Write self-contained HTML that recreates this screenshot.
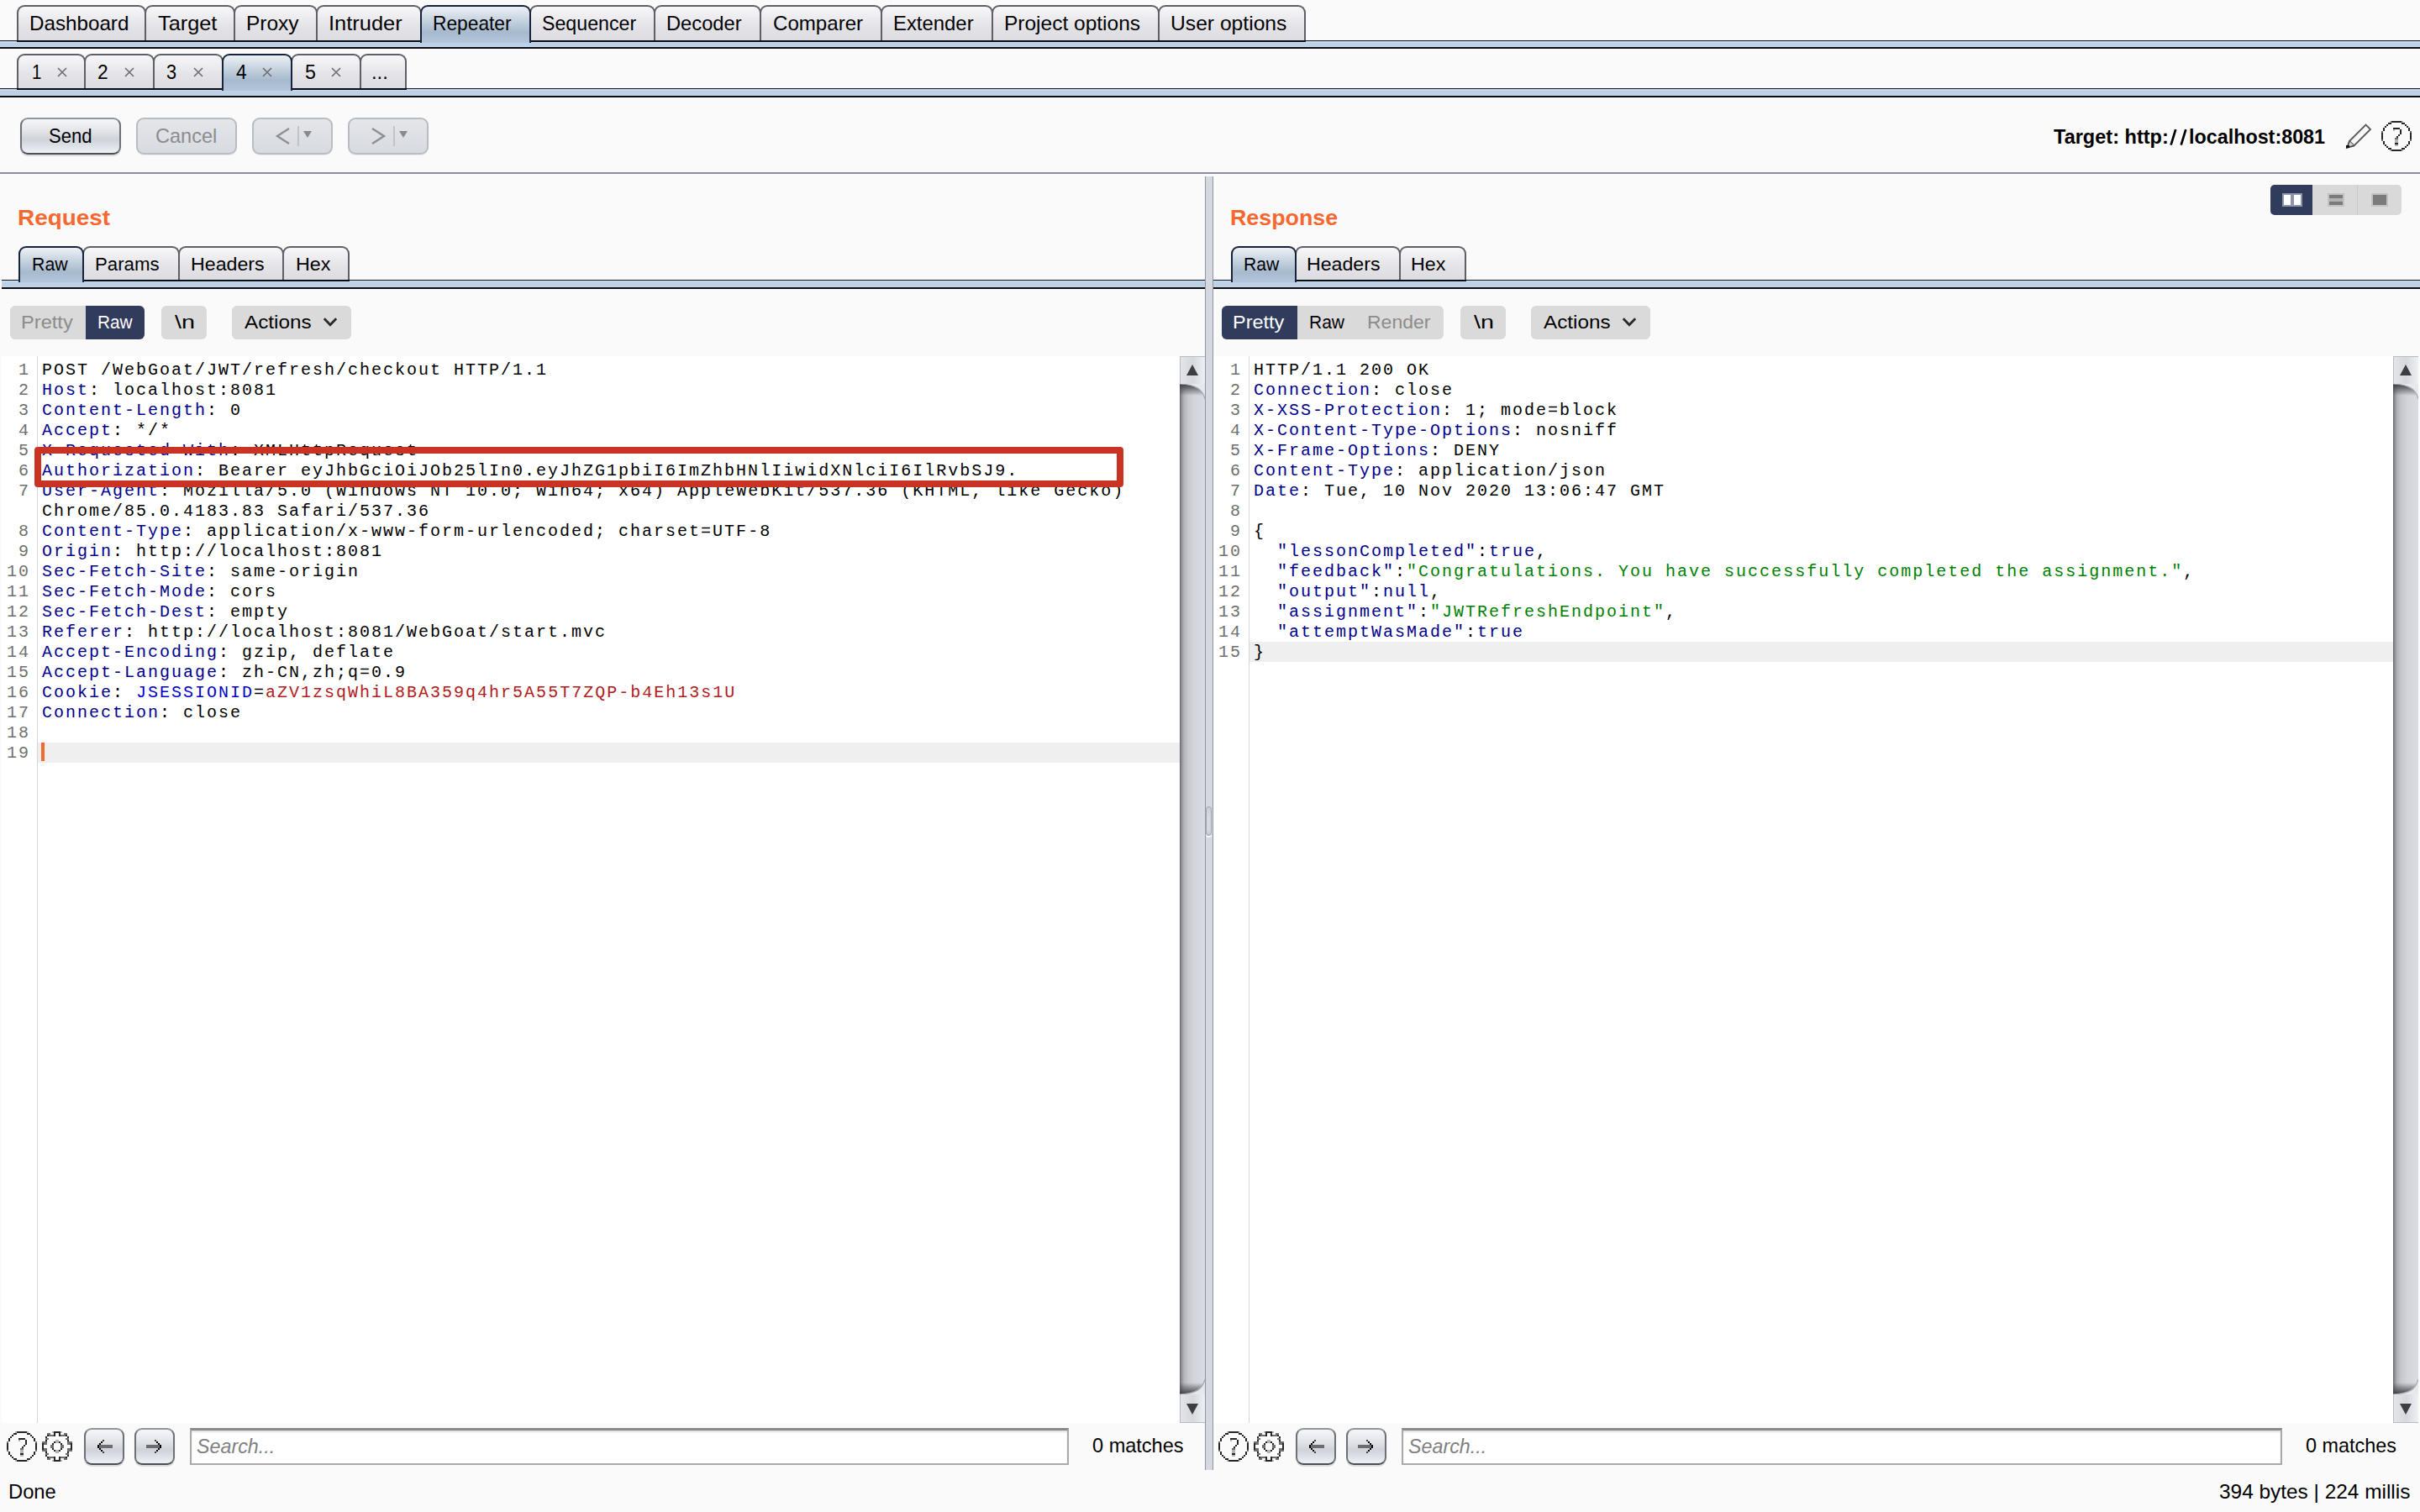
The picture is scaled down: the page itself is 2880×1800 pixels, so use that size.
<!DOCTYPE html><html><head><meta charset="utf-8"><title>Burp Suite Repeater</title><style>
*{margin:0;padding:0;box-sizing:border-box}
html,body{width:2880px;height:1800px;overflow:hidden;background:#fafafa;font-family:"Liberation Sans",sans-serif;color:#000}
div,span{position:absolute}
.tab{border:2px solid #5d6066;border-bottom:none;border-radius:9px 9px 0 0;
 background:linear-gradient(#f7f7f9,#e4e4e8 55%,#dcdce0)}
.tab.sel{border-color:#15243a;background:linear-gradient(#eef1f5,#c9d5e1 35%,#a7bacd 70%,#b3c6da)}
.tabline{height:2px;background:#0b0b14}
.bar{background:#bcd1e6}
.dline{height:2px;background:#0b0b14}
.t{white-space:nowrap;line-height:1;transform-origin:0 0}
.btn{border:2px solid #6d7176;border-top-color:#8f9599;border-bottom-color:#4b4e53;border-radius:9px;
 background:linear-gradient(#f5f6f8,#e3e5e9 35%,#cfd2d9 60%,#dde1e8 80%,#eef2f8);box-shadow:0 2px 1px rgba(0,0,0,0.12)}
.btn.dis{border-color:#b9bcc0;background:linear-gradient(#e4e6ea,#d7dae0);box-shadow:0 1px 1px rgba(0,0,0,0.06)}
.seg{background:#dadada;border-radius:6px}
.ed{background:#fff}
.gl{background:#d6d6d6;width:1px}
.row{left:0;height:24px;white-space:pre;font-family:"Liberation Mono",monospace;font-size:20px;letter-spacing:2px;line-height:24px}
.ln{white-space:pre;font-family:"Liberation Mono",monospace;font-size:20px;letter-spacing:2px;line-height:24px;color:#707070;text-align:right}
.mono{position:static}
.k{position:static;color:#00008a}
.ck{position:static;color:#0000c8}
.cv{position:static;color:#b01c1c}
.g{position:static;color:#008000}
.sb{width:30px;background:linear-gradient(90deg,#66676c 0,#8e9095 2px,#b2b4b9 5px,#c8c9ce 10px,#d2d4da 17px,#d9dce4 30px)}
.sbtn{width:30px;height:34px;background:linear-gradient(90deg,#e3e5e8,#d5d8dc 50%,#eef1f4);border-left:1px solid #b9bbbf}
</style></head><body>
<div style="left:0px;top:48px;width:2880px;height:1px;background:#1a1a24"></div>
<div class="bar" style="left:0px;top:49px;width:2880px;height:7px"></div>
<div style="left:0px;top:50px;width:2880px;height:1px;background:#c8dcf0"></div>
<div style="left:0px;top:55px;width:2880px;height:1px;background:#c4d9ee"></div>
<div class="dline" style="left:0px;top:56px;width:2880px"></div>
<div class="tab" style="left:20px;top:6px;width:154px;height:44px"></div>
<div class="tabline" style="left:20px;top:48px;width:154px"></div>
<div class="tab" style="left:172px;top:6px;width:108px;height:44px"></div>
<div class="tabline" style="left:172px;top:48px;width:108px"></div>
<div class="tab" style="left:278px;top:6px;width:100px;height:44px"></div>
<div class="tabline" style="left:278px;top:48px;width:100px"></div>
<div class="tab" style="left:376px;top:6px;width:126px;height:44px"></div>
<div class="tabline" style="left:376px;top:48px;width:126px"></div>
<div class="tab" style="left:630px;top:6px;width:150px;height:44px"></div>
<div class="tabline" style="left:630px;top:48px;width:150px"></div>
<div class="tab" style="left:778px;top:6px;width:128px;height:44px"></div>
<div class="tabline" style="left:778px;top:48px;width:128px"></div>
<div class="tab" style="left:904px;top:6px;width:146px;height:44px"></div>
<div class="tabline" style="left:904px;top:48px;width:146px"></div>
<div class="tab" style="left:1048px;top:6px;width:134px;height:44px"></div>
<div class="tabline" style="left:1048px;top:48px;width:134px"></div>
<div class="tab" style="left:1180px;top:6px;width:200px;height:44px"></div>
<div class="tabline" style="left:1180px;top:48px;width:200px"></div>
<div class="tab" style="left:1378px;top:6px;width:176px;height:44px"></div>
<div class="tabline" style="left:1378px;top:48px;width:176px"></div>
<div class="tab sel" style="left:500px;top:6px;width:132px;height:45px"></div>
<div id="t0" class="t" style="left:35.30px;top:15.68px;font-size:24px;color:#000;transform:scaleX(1.0082);">Dashboard</div>
<div id="t1" class="t" style="left:187.70px;top:15.68px;font-size:24px;color:#000;transform:scaleX(1.0538);">Target</div>
<div id="t2" class="t" style="left:293.00px;top:15.68px;font-size:24px;color:#000;transform:scaleX(1.0204);">Proxy</div>
<div id="t3" class="t" style="left:391.00px;top:15.68px;font-size:24px;color:#000;transform:scaleX(1.0599);">Intruder</div>
<div id="t4" class="t" style="left:515.00px;top:15.68px;font-size:24px;color:#000;transform:scaleX(0.9481);">Repeater</div>
<div id="t5" class="t" style="left:644.90px;top:15.68px;font-size:24px;color:#000;transform:scaleX(0.9665);">Sequencer</div>
<div id="t6" class="t" style="left:792.70px;top:15.68px;font-size:24px;color:#000;transform:scaleX(0.9876);">Decoder</div>
<div id="t7" class="t" style="left:919.50px;top:15.68px;font-size:24px;color:#000;transform:scaleX(1.0040);">Comparer</div>
<div id="t8" class="t" style="left:1063.00px;top:15.68px;font-size:24px;color:#000;transform:scaleX(0.9952);">Extender</div>
<div id="t9" class="t" style="left:1194.50px;top:15.68px;font-size:24px;color:#000;transform:scaleX(1.0204);">Project options</div>
<div id="t10" class="t" style="left:1392.60px;top:15.68px;font-size:24px;color:#000;transform:scaleX(1.0271);">User options</div>
<div style="left:0px;top:105px;width:2880px;height:1px;background:#1a1a24"></div>
<div class="bar" style="left:0px;top:106px;width:2880px;height:8px"></div>
<div style="left:0px;top:107px;width:2880px;height:1px;background:#c8dcf0"></div>
<div style="left:0px;top:113px;width:2880px;height:1px;background:#c4d9ee"></div>
<div class="dline" style="left:0px;top:114px;width:2880px"></div>
<div class="tab" style="left:20px;top:64px;width:82px;height:43px"></div>
<div class="tabline" style="left:20px;top:105px;width:82px"></div>
<div class="tab" style="left:100px;top:64px;width:84px;height:43px"></div>
<div class="tabline" style="left:100px;top:105px;width:84px"></div>
<div class="tab" style="left:182px;top:64px;width:84px;height:43px"></div>
<div class="tabline" style="left:182px;top:105px;width:84px"></div>
<div class="tab" style="left:346px;top:64px;width:84px;height:43px"></div>
<div class="tabline" style="left:346px;top:105px;width:84px"></div>
<div class="tab" style="left:428px;top:64px;width:56px;height:43px"></div>
<div class="tabline" style="left:428px;top:105px;width:56px"></div>
<div class="tab sel" style="left:264px;top:64px;width:84px;height:44px"></div>
<div id="t11" class="t" style="left:37.80px;top:73.68px;font-size:24px;color:#000;transform:scaleX(0.8547);">1</div>
<div style="left:68px;top:78px;width:12px;height:12px"><svg width="12" height="12" viewBox="0 0 12 12"><path d="M1 1L11 11M11 1L1 11" stroke="#6e6e6e" stroke-width="1.6"/></svg></div>
<div id="t12" class="t" style="left:116.10px;top:73.68px;font-size:24px;color:#000;transform:scaleX(0.9497);">2</div>
<div style="left:148px;top:78px;width:12px;height:12px"><svg width="12" height="12" viewBox="0 0 12 12"><path d="M1 1L11 11M11 1L1 11" stroke="#6e6e6e" stroke-width="1.6"/></svg></div>
<div id="t13" class="t" style="left:198.20px;top:73.68px;font-size:24px;color:#000;transform:scaleX(0.9056);">3</div>
<div style="left:230px;top:78px;width:12px;height:12px"><svg width="12" height="12" viewBox="0 0 12 12"><path d="M1 1L11 11M11 1L1 11" stroke="#6e6e6e" stroke-width="1.6"/></svg></div>
<div id="t14" class="t" style="left:280.80px;top:73.68px;font-size:24px;color:#000;transform:scaleX(0.9401);">4</div>
<div style="left:312px;top:78px;width:12px;height:12px"><svg width="12" height="12" viewBox="0 0 12 12"><path d="M1 1L11 11M11 1L1 11" stroke="#6e6e6e" stroke-width="1.6"/></svg></div>
<div id="t15" class="t" style="left:362.60px;top:73.68px;font-size:24px;color:#000;transform:scaleX(0.9690);">5</div>
<div style="left:394px;top:78px;width:12px;height:12px"><svg width="12" height="12" viewBox="0 0 12 12"><path d="M1 1L11 11M11 1L1 11" stroke="#6e6e6e" stroke-width="1.6"/></svg></div>
<div id="t16" class="t" style="left:442.00px;top:73.68px;font-size:24px;color:#000;transform:scaleX(0.9923);">...</div>
<div class="btn" style="left:24px;top:140px;width:120px;height:44px"></div>
<div id="t17" class="t" style="left:57.50px;top:149.88px;font-size:24px;color:#000;transform:scaleX(0.9189);">Send</div>
<div class="btn dis" style="left:162px;top:140px;width:120px;height:44px"></div>
<div id="t18" class="t" style="left:184.90px;top:149.88px;font-size:24px;color:#8c8c8c;transform:scaleX(0.9810);">Cancel</div>
<div class="btn dis" style="left:300px;top:140px;width:96px;height:44px"></div>
<div style="left:354px;top:150px;width:2px;height:24px;background:#c2c3c8"></div>
<div style="left:361px;top:156px;width:0;height:0;border-left:5px solid transparent;border-right:5px solid transparent;border-top:8px solid #8a8a8a"></div>
<div class="btn dis" style="left:414px;top:140px;width:96px;height:44px"></div>
<div style="left:468px;top:150px;width:2px;height:24px;background:#c2c3c8"></div>
<div style="left:475px;top:156px;width:0;height:0;border-left:5px solid transparent;border-right:5px solid transparent;border-top:8px solid #8a8a8a"></div>
<div style="left:327px;top:151px"><svg width="20" height="22" viewBox="0 0 20 22"><path d="M17 2L3 11L17 20" fill="none" stroke="#8f8f8f" stroke-width="2.4"/></svg></div>
<div style="left:440px;top:151px"><svg width="20" height="22" viewBox="0 0 20 22"><path d="M3 2L17 11L3 20" fill="none" stroke="#8f8f8f" stroke-width="2.4"/></svg></div>
<div id="t19" class="t" style="left:2444.00px;top:150.68px;font-size:24px;color:#000;font-weight:bold;transform:scaleX(0.9804);">Target: http:</div>
<div id="t20" class="t" style="left:2604.70px;top:150.68px;font-size:24px;color:#000;font-weight:bold;transform:scaleX(0.9719);">localhost:8081</div>
<div style="left:2578px;top:150px"><svg width="30" height="26" viewBox="0 0 30 26"><path d="M11.2 4.2L5.6 22.6M23.3 4.2L17.7 22.6" stroke="#000" stroke-width="2.7" stroke-linecap="butt"/></svg></div>
<div style="left:2790px;top:146px"><svg width="34" height="32" viewBox="0 0 34 32"><path d="M6 22L25.5 2.5L31 8L11.5 27.5Z" fill="none" stroke="#5c5c5c" stroke-width="1.9" stroke-linejoin="miter"/><path d="M6 22L3 30L11.5 27.5" fill="#cfcfcf" stroke="#3a3a3a" stroke-width="1.6"/><rect x="2" y="27" width="4" height="3" fill="#111"/></svg></div>
<div style="left:0;top:205px;width:2880px;height:2px;background:#8e8d9e"></div>
<div style="left:2702px;top:220px;width:156px;height:36px;border-radius:5px;background:#d9d9d9;overflow:hidden"><div style="left:0;top:0;width:50px;height:36px;background:#313b5b"></div><div style="left:103px;top:0;width:1px;height:36px;background:#c8c8c8"></div><div style="left:14px;top:10px;width:24px;height:16px;background:#8f95ab"></div><div style="left:16px;top:12px;width:8px;height:12px;background:#fff"></div><div style="left:28px;top:12px;width:8px;height:12px;background:#fff"></div><div style="left:68px;top:10px;width:20px;height:16px;background:#c2c2c2"></div><div style="left:70px;top:12px;width:16px;height:4px;background:#7a7b7d"></div><div style="left:70px;top:16px;width:16px;height:4px;background:#b1b3b1"></div><div style="left:70px;top:20px;width:16px;height:4px;background:#7a7b7d"></div><div style="left:120px;top:10px;width:20px;height:16px;background:#c2c2c2"></div><div style="left:122px;top:12px;width:16px;height:12px;background:#7a7b7d"></div></div>
<div style="left:1434px;top:210px;width:10px;height:1540px;background:#d5d8df;border-left:1px solid #8f95a3;border-right:1px solid #8f95a3"></div>
<div style="left:1435px;top:960px;width:7px;height:35px;border-radius:3.5px;border:1.5px solid #9ca1ab;background:linear-gradient(#c9ccd3,#d6d9df 30%,#d6d9df 80%,#c4c7ce);box-shadow:0 2px 1px rgba(255,255,255,0.9)"></div>
<div id="t21" class="t" style="left:21.20px;top:245.99px;font-size:26px;color:#f5682f;font-weight:bold;transform:scaleX(1.0733);">Request</div>
<div style="left:2px;top:333px;width:1432px;height:1px;background:#1a1a24"></div>
<div class="bar" style="left:2px;top:334px;width:1432px;height:8px"></div>
<div style="left:2px;top:335px;width:1432px;height:1px;background:#c8dcf0"></div>
<div style="left:2px;top:341px;width:1432px;height:1px;background:#c4d9ee"></div>
<div class="dline" style="left:2px;top:342px;width:1432px"></div>
<div class="tab" style="left:98px;top:293px;width:116px;height:42px"></div>
<div class="tabline" style="left:98px;top:333px;width:116px"></div>
<div class="tab" style="left:212px;top:293px;width:126px;height:42px"></div>
<div class="tabline" style="left:212px;top:333px;width:126px"></div>
<div class="tab" style="left:336px;top:293px;width:80px;height:42px"></div>
<div class="tabline" style="left:336px;top:333px;width:80px"></div>
<div class="tab sel" style="left:22px;top:293px;width:78px;height:43px"></div>
<div id="t22" class="t" style="left:38.00px;top:303.68px;font-size:22px;color:#000;transform:scaleX(0.9682);">Raw</div>
<div id="t23" class="t" style="left:113.20px;top:303.68px;font-size:22px;color:#000;transform:scaleX(1.0112);">Params</div>
<div id="t24" class="t" style="left:227.00px;top:303.68px;font-size:22px;color:#000;transform:scaleX(1.0538);">Headers</div>
<div id="t25" class="t" style="left:351.60px;top:303.68px;font-size:22px;color:#000;transform:scaleX(1.0596);">Hex</div>
<div class="seg" style="left:12px;top:364px;width:160px;height:40px"></div>
<div style="left:102px;top:364px;width:70px;height:40px;background:#313b5b;border-radius:0px 6px 6px 0px"></div>
<div id="t26" class="t" style="left:25.20px;top:372.88px;font-size:22px;color:#8c8c8c;transform:scaleX(1.0745);">Pretty</div>
<div id="t27" class="t" style="left:116.30px;top:372.88px;font-size:22px;color:#fff;transform:scaleX(0.9461);">Raw</div>
<div class="seg" style="left:192px;top:364px;width:54px;height:40px"></div>
<div id="t28" class="t" style="left:208.00px;top:372.88px;font-size:22px;color:#000;transform:scaleX(1.3075);">\n</div>
<div class="seg" style="left:276px;top:364px;width:142px;height:40px"></div>
<div id="t29" class="t" style="left:290.60px;top:372.88px;font-size:22px;color:#000;transform:scaleX(1.1042);">Actions</div>
<div style="left:384px;top:377px"><svg width="18" height="14" viewBox="0 0 18 14"><path d="M1.8 2.2L9 9.8L16.2 2.2" fill="none" stroke="#2a2a2a" stroke-width="2.8"/></svg></div>
<div id="t30" class="t" style="left:1464.20px;top:245.99px;font-size:26px;color:#f5682f;font-weight:bold;transform:scaleX(1.0308);">Response</div>
<div style="left:1444px;top:333px;width:1436px;height:1px;background:#1a1a24"></div>
<div class="bar" style="left:1444px;top:334px;width:1436px;height:8px"></div>
<div style="left:1444px;top:335px;width:1436px;height:1px;background:#c8dcf0"></div>
<div style="left:1444px;top:341px;width:1436px;height:1px;background:#c4d9ee"></div>
<div class="dline" style="left:1444px;top:342px;width:1436px"></div>
<div class="tab" style="left:1541px;top:293px;width:126px;height:42px"></div>
<div class="tabline" style="left:1541px;top:333px;width:126px"></div>
<div class="tab" style="left:1665px;top:293px;width:80px;height:42px"></div>
<div class="tabline" style="left:1665px;top:333px;width:80px"></div>
<div class="tab sel" style="left:1464.5px;top:293px;width:78.5px;height:43px"></div>
<div id="t31" class="t" style="left:1479.90px;top:303.68px;font-size:22px;color:#000;transform:scaleX(0.9594);">Raw</div>
<div id="t32" class="t" style="left:1555.10px;top:303.68px;font-size:22px;color:#000;transform:scaleX(1.0525);">Headers</div>
<div id="t33" class="t" style="left:1679.10px;top:303.68px;font-size:22px;color:#000;transform:scaleX(1.0555);">Hex</div>
<div class="seg" style="left:1454px;top:364px;width:264px;height:40px"></div>
<div style="left:1454px;top:364px;width:90px;height:40px;background:#313b5b;border-radius:6px 0px 0px 6px"></div>
<div id="t34" class="t" style="left:1467.20px;top:372.88px;font-size:22px;color:#fff;transform:scaleX(1.0673);">Pretty</div>
<div id="t35" class="t" style="left:1558.00px;top:372.88px;font-size:22px;color:#000;transform:scaleX(0.9551);">Raw</div>
<div id="t36" class="t" style="left:1626.80px;top:372.88px;font-size:22px;color:#8c8c8c;transform:scaleX(1.0450);">Render</div>
<div class="seg" style="left:1738px;top:364px;width:54px;height:40px"></div>
<div id="t37" class="t" style="left:1754.00px;top:372.88px;font-size:22px;color:#000;transform:scaleX(1.3075);">\n</div>
<div class="seg" style="left:1822px;top:364px;width:142px;height:40px"></div>
<div id="t38" class="t" style="left:1836.60px;top:372.88px;font-size:22px;color:#000;transform:scaleX(1.1042);">Actions</div>
<div style="left:1930px;top:377px"><svg width="18" height="14" viewBox="0 0 18 14"><path d="M1.8 2.2L9 9.8L16.2 2.2" fill="none" stroke="#2a2a2a" stroke-width="2.8"/></svg></div>
<div class="ed" style="left:2px;top:424px;width:1402px;height:1270px"></div>
<div class="gl" style="left:44px;top:424px;height:1270px"></div>
<div style="left:45px;top:884px;width:1359px;height:24px;background:#efefef"></div>
<div class="ln" style="left:2px;width:34px;top:429px;height:24px">1</div>
<div class="row" style="left:50px;top:429px">POST /WebGoat/JWT/refresh/checkout HTTP/1.1</div>
<div class="ln" style="left:2px;width:34px;top:453px;height:24px">2</div>
<div class="row" style="left:50px;top:453px"><span class="k">Host</span>: localhost:8081</div>
<div class="ln" style="left:2px;width:34px;top:477px;height:24px">3</div>
<div class="row" style="left:50px;top:477px"><span class="k">Content-Length</span>: 0</div>
<div class="ln" style="left:2px;width:34px;top:501px;height:24px">4</div>
<div class="row" style="left:50px;top:501px"><span class="k">Accept</span>: */*</div>
<div class="ln" style="left:2px;width:34px;top:525px;height:24px">5</div>
<div class="row" style="left:50px;top:525px"><span class="k">X-Requested-With</span>: XMLHttpRequest</div>
<div class="ln" style="left:2px;width:34px;top:549px;height:24px">6</div>
<div class="row" style="left:50px;top:549px"><span class="k">Authorization</span>: Bearer eyJhbGciOiJOb25lIn0.eyJhZG1pbiI6ImZhbHNlIiwidXNlciI6IlRvbSJ9.</div>
<div class="ln" style="left:2px;width:34px;top:573px;height:24px">7</div>
<div class="row" style="left:50px;top:573px"><span class="k">User-Agent</span>: Mozilla/5.0 (Windows NT 10.0; Win64; x64) AppleWebKit/537.36 (KHTML, like Gecko)</div>
<div class="row" style="left:50px;top:597px">Chrome/85.0.4183.83 Safari/537.36</div>
<div class="ln" style="left:2px;width:34px;top:621px;height:24px">8</div>
<div class="row" style="left:50px;top:621px"><span class="k">Content-Type</span>: application/x-www-form-urlencoded; charset=UTF-8</div>
<div class="ln" style="left:2px;width:34px;top:645px;height:24px">9</div>
<div class="row" style="left:50px;top:645px"><span class="k">Origin</span>: http://localhost:8081</div>
<div class="ln" style="left:2px;width:34px;top:669px;height:24px">10</div>
<div class="row" style="left:50px;top:669px"><span class="k">Sec-Fetch-Site</span>: same-origin</div>
<div class="ln" style="left:2px;width:34px;top:693px;height:24px">11</div>
<div class="row" style="left:50px;top:693px"><span class="k">Sec-Fetch-Mode</span>: cors</div>
<div class="ln" style="left:2px;width:34px;top:717px;height:24px">12</div>
<div class="row" style="left:50px;top:717px"><span class="k">Sec-Fetch-Dest</span>: empty</div>
<div class="ln" style="left:2px;width:34px;top:741px;height:24px">13</div>
<div class="row" style="left:50px;top:741px"><span class="k">Referer</span>: http://localhost:8081/WebGoat/start.mvc</div>
<div class="ln" style="left:2px;width:34px;top:765px;height:24px">14</div>
<div class="row" style="left:50px;top:765px"><span class="k">Accept-Encoding</span>: gzip, deflate</div>
<div class="ln" style="left:2px;width:34px;top:789px;height:24px">15</div>
<div class="row" style="left:50px;top:789px"><span class="k">Accept-Language</span>: zh-CN,zh;q=0.9</div>
<div class="ln" style="left:2px;width:34px;top:813px;height:24px">16</div>
<div class="row" style="left:50px;top:813px"><span class="k">Cookie</span>: <span class="ck">JSESSIONID</span>=<span class="cv">aZV1zsqWhiL8BA359q4hr5A55T7ZQP-b4Eh13s1U</span></div>
<div class="ln" style="left:2px;width:34px;top:837px;height:24px">17</div>
<div class="row" style="left:50px;top:837px"><span class="k">Connection</span>: close</div>
<div class="ln" style="left:2px;width:34px;top:861px;height:24px">18</div>
<div class="row" style="left:50px;top:861px"></div>
<div class="ln" style="left:2px;width:34px;top:885px;height:24px">19</div>
<div class="row" style="left:50px;top:885px"></div>
<div style="left:49px;top:884px;width:4px;height:22px;background:#f5682f"></div>
<div class="ed" style="left:1444px;top:424px;width:1404px;height:1270px"></div>
<div class="gl" style="left:1486px;top:424px;height:1270px"></div>
<div style="left:1487px;top:764px;width:1361px;height:24px;background:#efefef"></div>
<div class="ln" style="left:1444px;width:34px;top:429px;height:24px">1</div>
<div class="row" style="left:1492px;top:429px">HTTP/1.1 200 OK</div>
<div class="ln" style="left:1444px;width:34px;top:453px;height:24px">2</div>
<div class="row" style="left:1492px;top:453px"><span class="k">Connection</span>: close</div>
<div class="ln" style="left:1444px;width:34px;top:477px;height:24px">3</div>
<div class="row" style="left:1492px;top:477px"><span class="k">X-XSS-Protection</span>: 1; mode=block</div>
<div class="ln" style="left:1444px;width:34px;top:501px;height:24px">4</div>
<div class="row" style="left:1492px;top:501px"><span class="k">X-Content-Type-Options</span>: nosniff</div>
<div class="ln" style="left:1444px;width:34px;top:525px;height:24px">5</div>
<div class="row" style="left:1492px;top:525px"><span class="k">X-Frame-Options</span>: DENY</div>
<div class="ln" style="left:1444px;width:34px;top:549px;height:24px">6</div>
<div class="row" style="left:1492px;top:549px"><span class="k">Content-Type</span>: application/json</div>
<div class="ln" style="left:1444px;width:34px;top:573px;height:24px">7</div>
<div class="row" style="left:1492px;top:573px"><span class="k">Date</span>: Tue, 10 Nov 2020 13:06:47 GMT</div>
<div class="ln" style="left:1444px;width:34px;top:597px;height:24px">8</div>
<div class="row" style="left:1492px;top:597px"></div>
<div class="ln" style="left:1444px;width:34px;top:621px;height:24px">9</div>
<div class="row" style="left:1492px;top:621px">{</div>
<div class="ln" style="left:1444px;width:34px;top:645px;height:24px">10</div>
<div class="row" style="left:1492px;top:645px">  <span class="k">"lessonCompleted"</span>:<span class="k">true</span>,</div>
<div class="ln" style="left:1444px;width:34px;top:669px;height:24px">11</div>
<div class="row" style="left:1492px;top:669px">  <span class="k">"feedback"</span>:<span class="g">"Congratulations. You have successfully completed the assignment."</span>,</div>
<div class="ln" style="left:1444px;width:34px;top:693px;height:24px">12</div>
<div class="row" style="left:1492px;top:693px">  <span class="k">"output"</span>:<span class="k">null</span>,</div>
<div class="ln" style="left:1444px;width:34px;top:717px;height:24px">13</div>
<div class="row" style="left:1492px;top:717px">  <span class="k">"assignment"</span>:<span class="g">"JWTRefreshEndpoint"</span>,</div>
<div class="ln" style="left:1444px;width:34px;top:741px;height:24px">14</div>
<div class="row" style="left:1492px;top:741px">  <span class="k">"attemptWasMade"</span>:<span class="k">true</span></div>
<div class="ln" style="left:1444px;width:34px;top:765px;height:24px">15</div>
<div class="row" style="left:1492px;top:765px">}</div>
<div class="sb" style="left:1404px;top:424px;height:1270px"></div>
<div class="sbtn" style="left:1404px;top:424px;border-top:1px solid #b9bbbf"></div>
<div class="sbtn" style="left:1404px;top:1660px;border-bottom:1px solid #b9bbbf"></div>
<div style="left:1412px;top:434px;width:0;height:0;border-left:7px solid transparent;border-right:7px solid transparent;border-bottom:13px solid #3e3e40"></div>
<div style="left:1412px;top:1671px;width:0;height:0;border-left:7px solid transparent;border-right:7px solid transparent;border-top:13px solid #3e3e40"></div>
<div style="left:1404px;top:457px"><svg width="30" height="22" viewBox="0 0 30 22"><defs><linearGradient id="tg1404" x1="0" y1="0" x2="0" y2="1"><stop offset="0" stop-color="#3c3e44"/><stop offset="1" stop-color="#3c3e44" stop-opacity="0"/></linearGradient></defs><rect x="0" y="0" width="30" height="14" fill="url(#tg1404)"/><path d="M0 0H30V18C27 6 19 1 0 0Z" fill="#e6e8eb"/><path d="M0 0C19 1 27 6 30 18" fill="none" stroke="#a9abb0" stroke-width="1.2"/></svg></div>
<div style="left:1404px;top:1638px"><svg width="30" height="22" viewBox="0 0 30 22"><defs><linearGradient id="bg1404" x1="0" y1="1" x2="0" y2="0"><stop offset="0" stop-color="#3c3e44"/><stop offset="1" stop-color="#3c3e44" stop-opacity="0"/></linearGradient></defs><rect x="0" y="8" width="30" height="14" fill="url(#bg1404)"/><path d="M0 22H30V4C27 16 19 21 0 22Z" fill="#e6e8eb"/><path d="M0 22C19 21 27 16 30 4" fill="none" stroke="#a9abb0" stroke-width="1.2"/></svg></div>
<div class="sb" style="left:2848px;top:424px;height:1270px"></div>
<div class="sbtn" style="left:2848px;top:424px;border-top:1px solid #b9bbbf"></div>
<div class="sbtn" style="left:2848px;top:1660px;border-bottom:1px solid #b9bbbf"></div>
<div style="left:2856px;top:434px;width:0;height:0;border-left:7px solid transparent;border-right:7px solid transparent;border-bottom:13px solid #3e3e40"></div>
<div style="left:2856px;top:1671px;width:0;height:0;border-left:7px solid transparent;border-right:7px solid transparent;border-top:13px solid #3e3e40"></div>
<div style="left:2848px;top:457px"><svg width="30" height="22" viewBox="0 0 30 22"><defs><linearGradient id="tg2848" x1="0" y1="0" x2="0" y2="1"><stop offset="0" stop-color="#3c3e44"/><stop offset="1" stop-color="#3c3e44" stop-opacity="0"/></linearGradient></defs><rect x="0" y="0" width="30" height="14" fill="url(#tg2848)"/><path d="M0 0H30V18C27 6 19 1 0 0Z" fill="#e6e8eb"/><path d="M0 0C19 1 27 6 30 18" fill="none" stroke="#a9abb0" stroke-width="1.2"/></svg></div>
<div style="left:2848px;top:1638px"><svg width="30" height="22" viewBox="0 0 30 22"><defs><linearGradient id="bg2848" x1="0" y1="1" x2="0" y2="0"><stop offset="0" stop-color="#3c3e44"/><stop offset="1" stop-color="#3c3e44" stop-opacity="0"/></linearGradient></defs><rect x="0" y="8" width="30" height="14" fill="url(#bg2848)"/><path d="M0 22H30V4C27 16 19 21 0 22Z" fill="#e6e8eb"/><path d="M0 22C19 21 27 16 30 4" fill="none" stroke="#a9abb0" stroke-width="1.2"/></svg></div>
<div style="left:41px;top:532px;width:1296px;height:48px;border:8px solid #c93324;border-radius:4px"></div>
<div style="left:8px;top:1704px"><svg width="36" height="36" viewBox="0 0 36 36" shape-rendering="crispEdges"><rect x="10" y="0" width="2" height="2" fill="#b4b4b4"/><rect x="12" y="0" width="12" height="2" fill="#262626"/><rect x="24" y="0" width="2" height="2" fill="#b4b4b4"/><rect x="8" y="2" width="4" height="2" fill="#262626"/><rect x="24" y="2" width="4" height="2" fill="#262626"/><rect x="6" y="4" width="2" height="2" fill="#262626"/><rect x="28" y="4" width="2" height="2" fill="#262626"/><rect x="4" y="6" width="2" height="2" fill="#262626"/><rect x="30" y="6" width="2" height="2" fill="#262626"/><rect x="2" y="8" width="2" height="2" fill="#262626"/><rect x="14" y="8" width="8" height="2" fill="#262626"/><rect x="32" y="8" width="2" height="2" fill="#262626"/><rect x="2" y="10" width="2" height="2" fill="#262626"/><rect x="14" y="10" width="2" height="2" fill="#b4b4b4"/><rect x="22" y="10" width="2" height="2" fill="#262626"/><rect x="32" y="10" width="2" height="2" fill="#262626"/><rect x="0" y="12" width="2" height="2" fill="#6e6e6e"/><rect x="22" y="12" width="2" height="2" fill="#262626"/><rect x="34" y="12" width="2" height="2" fill="#6e6e6e"/><rect x="0" y="14" width="2" height="2" fill="#262626"/><rect x="22" y="14" width="2" height="2" fill="#262626"/><rect x="34" y="14" width="2" height="2" fill="#262626"/><rect x="0" y="16" width="2" height="2" fill="#262626"/><rect x="20" y="16" width="2" height="2" fill="#262626"/><rect x="34" y="16" width="2" height="2" fill="#262626"/><rect x="0" y="18" width="2" height="2" fill="#262626"/><rect x="18" y="18" width="2" height="2" fill="#262626"/><rect x="34" y="18" width="2" height="2" fill="#262626"/><rect x="0" y="20" width="2" height="2" fill="#262626"/><rect x="16" y="20" width="4" height="2" fill="#6e6e6e"/><rect x="34" y="20" width="2" height="2" fill="#262626"/><rect x="0" y="22" width="2" height="2" fill="#6e6e6e"/><rect x="16" y="22" width="4" height="2" fill="#b4b4b4"/><rect x="34" y="22" width="2" height="2" fill="#6e6e6e"/><rect x="2" y="24" width="2" height="2" fill="#262626"/><rect x="16" y="24" width="4" height="2" fill="#b4b4b4"/><rect x="32" y="24" width="2" height="2" fill="#262626"/><rect x="2" y="26" width="2" height="2" fill="#262626"/><rect x="16" y="26" width="4" height="2" fill="#262626"/><rect x="32" y="26" width="2" height="2" fill="#262626"/><rect x="4" y="28" width="2" height="2" fill="#262626"/><rect x="16" y="28" width="4" height="2" fill="#b4b4b4"/><rect x="30" y="28" width="2" height="2" fill="#262626"/><rect x="6" y="30" width="2" height="2" fill="#262626"/><rect x="28" y="30" width="2" height="2" fill="#262626"/><rect x="8" y="32" width="4" height="2" fill="#262626"/><rect x="24" y="32" width="4" height="2" fill="#262626"/><rect x="10" y="34" width="2" height="2" fill="#b4b4b4"/><rect x="12" y="34" width="12" height="2" fill="#262626"/><rect x="24" y="34" width="2" height="2" fill="#b4b4b4"/></svg></div>
<div style="left:50px;top:1704px"><svg width="36" height="36" viewBox="0 0 36 36" shape-rendering="crispEdges"><rect x="12" y="0" width="2" height="2" fill="#b4b4b4"/><rect x="14" y="0" width="8" height="2" fill="#262626"/><rect x="22" y="0" width="2" height="2" fill="#b4b4b4"/><rect x="6" y="2" width="4" height="2" fill="#6e6e6e"/><rect x="14" y="2" width="2" height="2" fill="#262626"/><rect x="20" y="2" width="2" height="2" fill="#262626"/><rect x="26" y="2" width="4" height="2" fill="#6e6e6e"/><rect x="6" y="4" width="2" height="2" fill="#262626"/><rect x="8" y="4" width="6" height="2" fill="#6e6e6e"/><rect x="14" y="4" width="2" height="2" fill="#262626"/><rect x="20" y="4" width="2" height="2" fill="#262626"/><rect x="22" y="4" width="6" height="2" fill="#6e6e6e"/><rect x="28" y="4" width="2" height="2" fill="#262626"/><rect x="4" y="6" width="2" height="2" fill="#262626"/><rect x="30" y="6" width="2" height="2" fill="#262626"/><rect x="4" y="8" width="4" height="2" fill="#6e6e6e"/><rect x="28" y="8" width="4" height="2" fill="#6e6e6e"/><rect x="4" y="10" width="2" height="2" fill="#262626"/><rect x="16" y="10" width="4" height="2" fill="#b4b4b4"/><rect x="30" y="10" width="2" height="2" fill="#262626"/><rect x="0" y="12" width="6" height="2" fill="#6e6e6e"/><rect x="14" y="12" width="2" height="2" fill="#262626"/><rect x="16" y="12" width="4" height="2" fill="#b4b4b4"/><rect x="20" y="12" width="2" height="2" fill="#262626"/><rect x="30" y="12" width="6" height="2" fill="#6e6e6e"/><rect x="0" y="14" width="2" height="2" fill="#262626"/><rect x="2" y="14" width="4" height="2" fill="#6e6e6e"/><rect x="12" y="14" width="2" height="2" fill="#262626"/><rect x="22" y="14" width="2" height="2" fill="#262626"/><rect x="30" y="14" width="4" height="2" fill="#6e6e6e"/><rect x="34" y="14" width="2" height="2" fill="#262626"/><rect x="0" y="16" width="2" height="2" fill="#262626"/><rect x="10" y="16" width="4" height="2" fill="#6e6e6e"/><rect x="22" y="16" width="4" height="2" fill="#6e6e6e"/><rect x="34" y="16" width="2" height="2" fill="#262626"/><rect x="0" y="18" width="2" height="2" fill="#262626"/><rect x="10" y="18" width="4" height="2" fill="#6e6e6e"/><rect x="22" y="18" width="4" height="2" fill="#6e6e6e"/><rect x="34" y="18" width="2" height="2" fill="#262626"/><rect x="0" y="20" width="2" height="2" fill="#262626"/><rect x="2" y="20" width="4" height="2" fill="#6e6e6e"/><rect x="12" y="20" width="2" height="2" fill="#262626"/><rect x="22" y="20" width="2" height="2" fill="#262626"/><rect x="30" y="20" width="4" height="2" fill="#6e6e6e"/><rect x="34" y="20" width="2" height="2" fill="#262626"/><rect x="0" y="22" width="6" height="2" fill="#6e6e6e"/><rect x="14" y="22" width="2" height="2" fill="#262626"/><rect x="16" y="22" width="4" height="2" fill="#b4b4b4"/><rect x="20" y="22" width="2" height="2" fill="#262626"/><rect x="30" y="22" width="6" height="2" fill="#6e6e6e"/><rect x="4" y="24" width="2" height="2" fill="#262626"/><rect x="16" y="24" width="4" height="2" fill="#b4b4b4"/><rect x="30" y="24" width="2" height="2" fill="#262626"/><rect x="4" y="26" width="4" height="2" fill="#6e6e6e"/><rect x="28" y="26" width="4" height="2" fill="#6e6e6e"/><rect x="4" y="28" width="2" height="2" fill="#262626"/><rect x="30" y="28" width="2" height="2" fill="#262626"/><rect x="6" y="30" width="2" height="2" fill="#262626"/><rect x="8" y="30" width="6" height="2" fill="#6e6e6e"/><rect x="14" y="30" width="2" height="2" fill="#262626"/><rect x="20" y="30" width="2" height="2" fill="#262626"/><rect x="22" y="30" width="6" height="2" fill="#6e6e6e"/><rect x="28" y="30" width="2" height="2" fill="#262626"/><rect x="6" y="32" width="4" height="2" fill="#6e6e6e"/><rect x="14" y="32" width="2" height="2" fill="#262626"/><rect x="20" y="32" width="2" height="2" fill="#262626"/><rect x="26" y="32" width="4" height="2" fill="#6e6e6e"/><rect x="12" y="34" width="2" height="2" fill="#b4b4b4"/><rect x="14" y="34" width="8" height="2" fill="#262626"/><rect x="22" y="34" width="2" height="2" fill="#b4b4b4"/></svg></div>
<div class="btn" style="left:100px;top:1700px;width:48px;height:44px"></div>
<div style="left:100px;top:1700px"><svg width="48" height="44" viewBox="0 0 48 44" shape-rendering="crispEdges"><rect x="18" y="20" width="16" height="4" fill="#6c6c70"/><rect x="22" y="14" width="2" height="2" fill="#444"/><rect x="20" y="16" width="2" height="2" fill="#000"/><rect x="18" y="18" width="2" height="2" fill="#000"/><rect x="16" y="20" width="2" height="4" fill="#000"/><rect x="18" y="24" width="2" height="2" fill="#000"/><rect x="20" y="26" width="2" height="2" fill="#000"/><rect x="22" y="28" width="2" height="2" fill="#444"/></svg></div>
<div class="btn" style="left:160px;top:1700px;width:48px;height:44px"></div>
<div style="left:160px;top:1700px"><svg width="48" height="44" viewBox="0 0 48 44" shape-rendering="crispEdges"><rect x="14" y="20" width="16" height="4" fill="#6c6c70"/><rect x="24" y="14" width="2" height="2" fill="#444"/><rect x="26" y="16" width="2" height="2" fill="#000"/><rect x="28" y="18" width="2" height="2" fill="#000"/><rect x="30" y="20" width="2" height="4" fill="#000"/><rect x="28" y="24" width="2" height="2" fill="#000"/><rect x="26" y="26" width="2" height="2" fill="#000"/><rect x="24" y="28" width="2" height="2" fill="#444"/></svg></div>
<div style="left:226px;top:1700px;width:1046px;height:44px;background:#fff;border:2px solid #a9a9a9;border-top:3px solid #8a8a8a;box-shadow:inset 0 2px 2px rgba(0,0,0,0.12)"></div>
<div id="t39" class="t" style="left:234.10px;top:1709.68px;font-size:24px;color:#808080;font-style:italic;transform:scaleX(0.9692);">Search...</div>
<div id="t40" class="t" style="left:1300.00px;top:1709.18px;font-size:24px;color:#000;transform:scaleX(0.9805);">0 matches</div>
<div style="left:1450px;top:1704px"><svg width="36" height="36" viewBox="0 0 36 36" shape-rendering="crispEdges"><rect x="10" y="0" width="2" height="2" fill="#b4b4b4"/><rect x="12" y="0" width="12" height="2" fill="#262626"/><rect x="24" y="0" width="2" height="2" fill="#b4b4b4"/><rect x="8" y="2" width="4" height="2" fill="#262626"/><rect x="24" y="2" width="4" height="2" fill="#262626"/><rect x="6" y="4" width="2" height="2" fill="#262626"/><rect x="28" y="4" width="2" height="2" fill="#262626"/><rect x="4" y="6" width="2" height="2" fill="#262626"/><rect x="30" y="6" width="2" height="2" fill="#262626"/><rect x="2" y="8" width="2" height="2" fill="#262626"/><rect x="14" y="8" width="8" height="2" fill="#262626"/><rect x="32" y="8" width="2" height="2" fill="#262626"/><rect x="2" y="10" width="2" height="2" fill="#262626"/><rect x="14" y="10" width="2" height="2" fill="#b4b4b4"/><rect x="22" y="10" width="2" height="2" fill="#262626"/><rect x="32" y="10" width="2" height="2" fill="#262626"/><rect x="0" y="12" width="2" height="2" fill="#6e6e6e"/><rect x="22" y="12" width="2" height="2" fill="#262626"/><rect x="34" y="12" width="2" height="2" fill="#6e6e6e"/><rect x="0" y="14" width="2" height="2" fill="#262626"/><rect x="22" y="14" width="2" height="2" fill="#262626"/><rect x="34" y="14" width="2" height="2" fill="#262626"/><rect x="0" y="16" width="2" height="2" fill="#262626"/><rect x="20" y="16" width="2" height="2" fill="#262626"/><rect x="34" y="16" width="2" height="2" fill="#262626"/><rect x="0" y="18" width="2" height="2" fill="#262626"/><rect x="18" y="18" width="2" height="2" fill="#262626"/><rect x="34" y="18" width="2" height="2" fill="#262626"/><rect x="0" y="20" width="2" height="2" fill="#262626"/><rect x="16" y="20" width="4" height="2" fill="#6e6e6e"/><rect x="34" y="20" width="2" height="2" fill="#262626"/><rect x="0" y="22" width="2" height="2" fill="#6e6e6e"/><rect x="16" y="22" width="4" height="2" fill="#b4b4b4"/><rect x="34" y="22" width="2" height="2" fill="#6e6e6e"/><rect x="2" y="24" width="2" height="2" fill="#262626"/><rect x="16" y="24" width="4" height="2" fill="#b4b4b4"/><rect x="32" y="24" width="2" height="2" fill="#262626"/><rect x="2" y="26" width="2" height="2" fill="#262626"/><rect x="16" y="26" width="4" height="2" fill="#262626"/><rect x="32" y="26" width="2" height="2" fill="#262626"/><rect x="4" y="28" width="2" height="2" fill="#262626"/><rect x="16" y="28" width="4" height="2" fill="#b4b4b4"/><rect x="30" y="28" width="2" height="2" fill="#262626"/><rect x="6" y="30" width="2" height="2" fill="#262626"/><rect x="28" y="30" width="2" height="2" fill="#262626"/><rect x="8" y="32" width="4" height="2" fill="#262626"/><rect x="24" y="32" width="4" height="2" fill="#262626"/><rect x="10" y="34" width="2" height="2" fill="#b4b4b4"/><rect x="12" y="34" width="12" height="2" fill="#262626"/><rect x="24" y="34" width="2" height="2" fill="#b4b4b4"/></svg></div>
<div style="left:1492px;top:1704px"><svg width="36" height="36" viewBox="0 0 36 36" shape-rendering="crispEdges"><rect x="12" y="0" width="2" height="2" fill="#b4b4b4"/><rect x="14" y="0" width="8" height="2" fill="#262626"/><rect x="22" y="0" width="2" height="2" fill="#b4b4b4"/><rect x="6" y="2" width="4" height="2" fill="#6e6e6e"/><rect x="14" y="2" width="2" height="2" fill="#262626"/><rect x="20" y="2" width="2" height="2" fill="#262626"/><rect x="26" y="2" width="4" height="2" fill="#6e6e6e"/><rect x="6" y="4" width="2" height="2" fill="#262626"/><rect x="8" y="4" width="6" height="2" fill="#6e6e6e"/><rect x="14" y="4" width="2" height="2" fill="#262626"/><rect x="20" y="4" width="2" height="2" fill="#262626"/><rect x="22" y="4" width="6" height="2" fill="#6e6e6e"/><rect x="28" y="4" width="2" height="2" fill="#262626"/><rect x="4" y="6" width="2" height="2" fill="#262626"/><rect x="30" y="6" width="2" height="2" fill="#262626"/><rect x="4" y="8" width="4" height="2" fill="#6e6e6e"/><rect x="28" y="8" width="4" height="2" fill="#6e6e6e"/><rect x="4" y="10" width="2" height="2" fill="#262626"/><rect x="16" y="10" width="4" height="2" fill="#b4b4b4"/><rect x="30" y="10" width="2" height="2" fill="#262626"/><rect x="0" y="12" width="6" height="2" fill="#6e6e6e"/><rect x="14" y="12" width="2" height="2" fill="#262626"/><rect x="16" y="12" width="4" height="2" fill="#b4b4b4"/><rect x="20" y="12" width="2" height="2" fill="#262626"/><rect x="30" y="12" width="6" height="2" fill="#6e6e6e"/><rect x="0" y="14" width="2" height="2" fill="#262626"/><rect x="2" y="14" width="4" height="2" fill="#6e6e6e"/><rect x="12" y="14" width="2" height="2" fill="#262626"/><rect x="22" y="14" width="2" height="2" fill="#262626"/><rect x="30" y="14" width="4" height="2" fill="#6e6e6e"/><rect x="34" y="14" width="2" height="2" fill="#262626"/><rect x="0" y="16" width="2" height="2" fill="#262626"/><rect x="10" y="16" width="4" height="2" fill="#6e6e6e"/><rect x="22" y="16" width="4" height="2" fill="#6e6e6e"/><rect x="34" y="16" width="2" height="2" fill="#262626"/><rect x="0" y="18" width="2" height="2" fill="#262626"/><rect x="10" y="18" width="4" height="2" fill="#6e6e6e"/><rect x="22" y="18" width="4" height="2" fill="#6e6e6e"/><rect x="34" y="18" width="2" height="2" fill="#262626"/><rect x="0" y="20" width="2" height="2" fill="#262626"/><rect x="2" y="20" width="4" height="2" fill="#6e6e6e"/><rect x="12" y="20" width="2" height="2" fill="#262626"/><rect x="22" y="20" width="2" height="2" fill="#262626"/><rect x="30" y="20" width="4" height="2" fill="#6e6e6e"/><rect x="34" y="20" width="2" height="2" fill="#262626"/><rect x="0" y="22" width="6" height="2" fill="#6e6e6e"/><rect x="14" y="22" width="2" height="2" fill="#262626"/><rect x="16" y="22" width="4" height="2" fill="#b4b4b4"/><rect x="20" y="22" width="2" height="2" fill="#262626"/><rect x="30" y="22" width="6" height="2" fill="#6e6e6e"/><rect x="4" y="24" width="2" height="2" fill="#262626"/><rect x="16" y="24" width="4" height="2" fill="#b4b4b4"/><rect x="30" y="24" width="2" height="2" fill="#262626"/><rect x="4" y="26" width="4" height="2" fill="#6e6e6e"/><rect x="28" y="26" width="4" height="2" fill="#6e6e6e"/><rect x="4" y="28" width="2" height="2" fill="#262626"/><rect x="30" y="28" width="2" height="2" fill="#262626"/><rect x="6" y="30" width="2" height="2" fill="#262626"/><rect x="8" y="30" width="6" height="2" fill="#6e6e6e"/><rect x="14" y="30" width="2" height="2" fill="#262626"/><rect x="20" y="30" width="2" height="2" fill="#262626"/><rect x="22" y="30" width="6" height="2" fill="#6e6e6e"/><rect x="28" y="30" width="2" height="2" fill="#262626"/><rect x="6" y="32" width="4" height="2" fill="#6e6e6e"/><rect x="14" y="32" width="2" height="2" fill="#262626"/><rect x="20" y="32" width="2" height="2" fill="#262626"/><rect x="26" y="32" width="4" height="2" fill="#6e6e6e"/><rect x="12" y="34" width="2" height="2" fill="#b4b4b4"/><rect x="14" y="34" width="8" height="2" fill="#262626"/><rect x="22" y="34" width="2" height="2" fill="#b4b4b4"/></svg></div>
<div class="btn" style="left:1542px;top:1700px;width:48px;height:44px"></div>
<div style="left:1542px;top:1700px"><svg width="48" height="44" viewBox="0 0 48 44" shape-rendering="crispEdges"><rect x="18" y="20" width="16" height="4" fill="#6c6c70"/><rect x="22" y="14" width="2" height="2" fill="#444"/><rect x="20" y="16" width="2" height="2" fill="#000"/><rect x="18" y="18" width="2" height="2" fill="#000"/><rect x="16" y="20" width="2" height="4" fill="#000"/><rect x="18" y="24" width="2" height="2" fill="#000"/><rect x="20" y="26" width="2" height="2" fill="#000"/><rect x="22" y="28" width="2" height="2" fill="#444"/></svg></div>
<div class="btn" style="left:1602px;top:1700px;width:48px;height:44px"></div>
<div style="left:1602px;top:1700px"><svg width="48" height="44" viewBox="0 0 48 44" shape-rendering="crispEdges"><rect x="14" y="20" width="16" height="4" fill="#6c6c70"/><rect x="24" y="14" width="2" height="2" fill="#444"/><rect x="26" y="16" width="2" height="2" fill="#000"/><rect x="28" y="18" width="2" height="2" fill="#000"/><rect x="30" y="20" width="2" height="4" fill="#000"/><rect x="28" y="24" width="2" height="2" fill="#000"/><rect x="26" y="26" width="2" height="2" fill="#000"/><rect x="24" y="28" width="2" height="2" fill="#444"/></svg></div>
<div style="left:1668px;top:1700px;width:1048px;height:44px;background:#fff;border:2px solid #a9a9a9;border-top:3px solid #8a8a8a;box-shadow:inset 0 2px 2px rgba(0,0,0,0.12)"></div>
<div id="t41" class="t" style="left:1676.10px;top:1709.68px;font-size:24px;color:#808080;font-style:italic;transform:scaleX(0.9692);">Search...</div>
<div id="t42" class="t" style="left:2744.00px;top:1709.38px;font-size:24px;color:#000;transform:scaleX(0.9741);">0 matches</div>
<div style="left:2834px;top:144px"><svg width="36" height="36" viewBox="0 0 36 36" shape-rendering="crispEdges"><rect x="10" y="0" width="2" height="2" fill="#b4b4b4"/><rect x="12" y="0" width="12" height="2" fill="#262626"/><rect x="24" y="0" width="2" height="2" fill="#b4b4b4"/><rect x="8" y="2" width="4" height="2" fill="#262626"/><rect x="24" y="2" width="4" height="2" fill="#262626"/><rect x="6" y="4" width="2" height="2" fill="#262626"/><rect x="28" y="4" width="2" height="2" fill="#262626"/><rect x="4" y="6" width="2" height="2" fill="#262626"/><rect x="30" y="6" width="2" height="2" fill="#262626"/><rect x="2" y="8" width="2" height="2" fill="#262626"/><rect x="14" y="8" width="8" height="2" fill="#262626"/><rect x="32" y="8" width="2" height="2" fill="#262626"/><rect x="2" y="10" width="2" height="2" fill="#262626"/><rect x="14" y="10" width="2" height="2" fill="#b4b4b4"/><rect x="22" y="10" width="2" height="2" fill="#262626"/><rect x="32" y="10" width="2" height="2" fill="#262626"/><rect x="0" y="12" width="2" height="2" fill="#6e6e6e"/><rect x="22" y="12" width="2" height="2" fill="#262626"/><rect x="34" y="12" width="2" height="2" fill="#6e6e6e"/><rect x="0" y="14" width="2" height="2" fill="#262626"/><rect x="22" y="14" width="2" height="2" fill="#262626"/><rect x="34" y="14" width="2" height="2" fill="#262626"/><rect x="0" y="16" width="2" height="2" fill="#262626"/><rect x="20" y="16" width="2" height="2" fill="#262626"/><rect x="34" y="16" width="2" height="2" fill="#262626"/><rect x="0" y="18" width="2" height="2" fill="#262626"/><rect x="18" y="18" width="2" height="2" fill="#262626"/><rect x="34" y="18" width="2" height="2" fill="#262626"/><rect x="0" y="20" width="2" height="2" fill="#262626"/><rect x="16" y="20" width="4" height="2" fill="#6e6e6e"/><rect x="34" y="20" width="2" height="2" fill="#262626"/><rect x="0" y="22" width="2" height="2" fill="#6e6e6e"/><rect x="16" y="22" width="4" height="2" fill="#b4b4b4"/><rect x="34" y="22" width="2" height="2" fill="#6e6e6e"/><rect x="2" y="24" width="2" height="2" fill="#262626"/><rect x="16" y="24" width="4" height="2" fill="#b4b4b4"/><rect x="32" y="24" width="2" height="2" fill="#262626"/><rect x="2" y="26" width="2" height="2" fill="#262626"/><rect x="16" y="26" width="4" height="2" fill="#262626"/><rect x="32" y="26" width="2" height="2" fill="#262626"/><rect x="4" y="28" width="2" height="2" fill="#262626"/><rect x="16" y="28" width="4" height="2" fill="#b4b4b4"/><rect x="30" y="28" width="2" height="2" fill="#262626"/><rect x="6" y="30" width="2" height="2" fill="#262626"/><rect x="28" y="30" width="2" height="2" fill="#262626"/><rect x="8" y="32" width="4" height="2" fill="#262626"/><rect x="24" y="32" width="4" height="2" fill="#262626"/><rect x="10" y="34" width="2" height="2" fill="#b4b4b4"/><rect x="12" y="34" width="12" height="2" fill="#262626"/><rect x="24" y="34" width="2" height="2" fill="#b4b4b4"/></svg></div>
<div id="t43" class="t" style="left:9.60px;top:1763.68px;font-size:24px;color:#000;transform:scaleX(0.9893);">Done</div>
<div id="t44" class="t" style="left:2641.10px;top:1763.88px;font-size:24px;color:#000;transform:scaleX(1.0166);">394 bytes | 224 millis</div>
</body></html>
